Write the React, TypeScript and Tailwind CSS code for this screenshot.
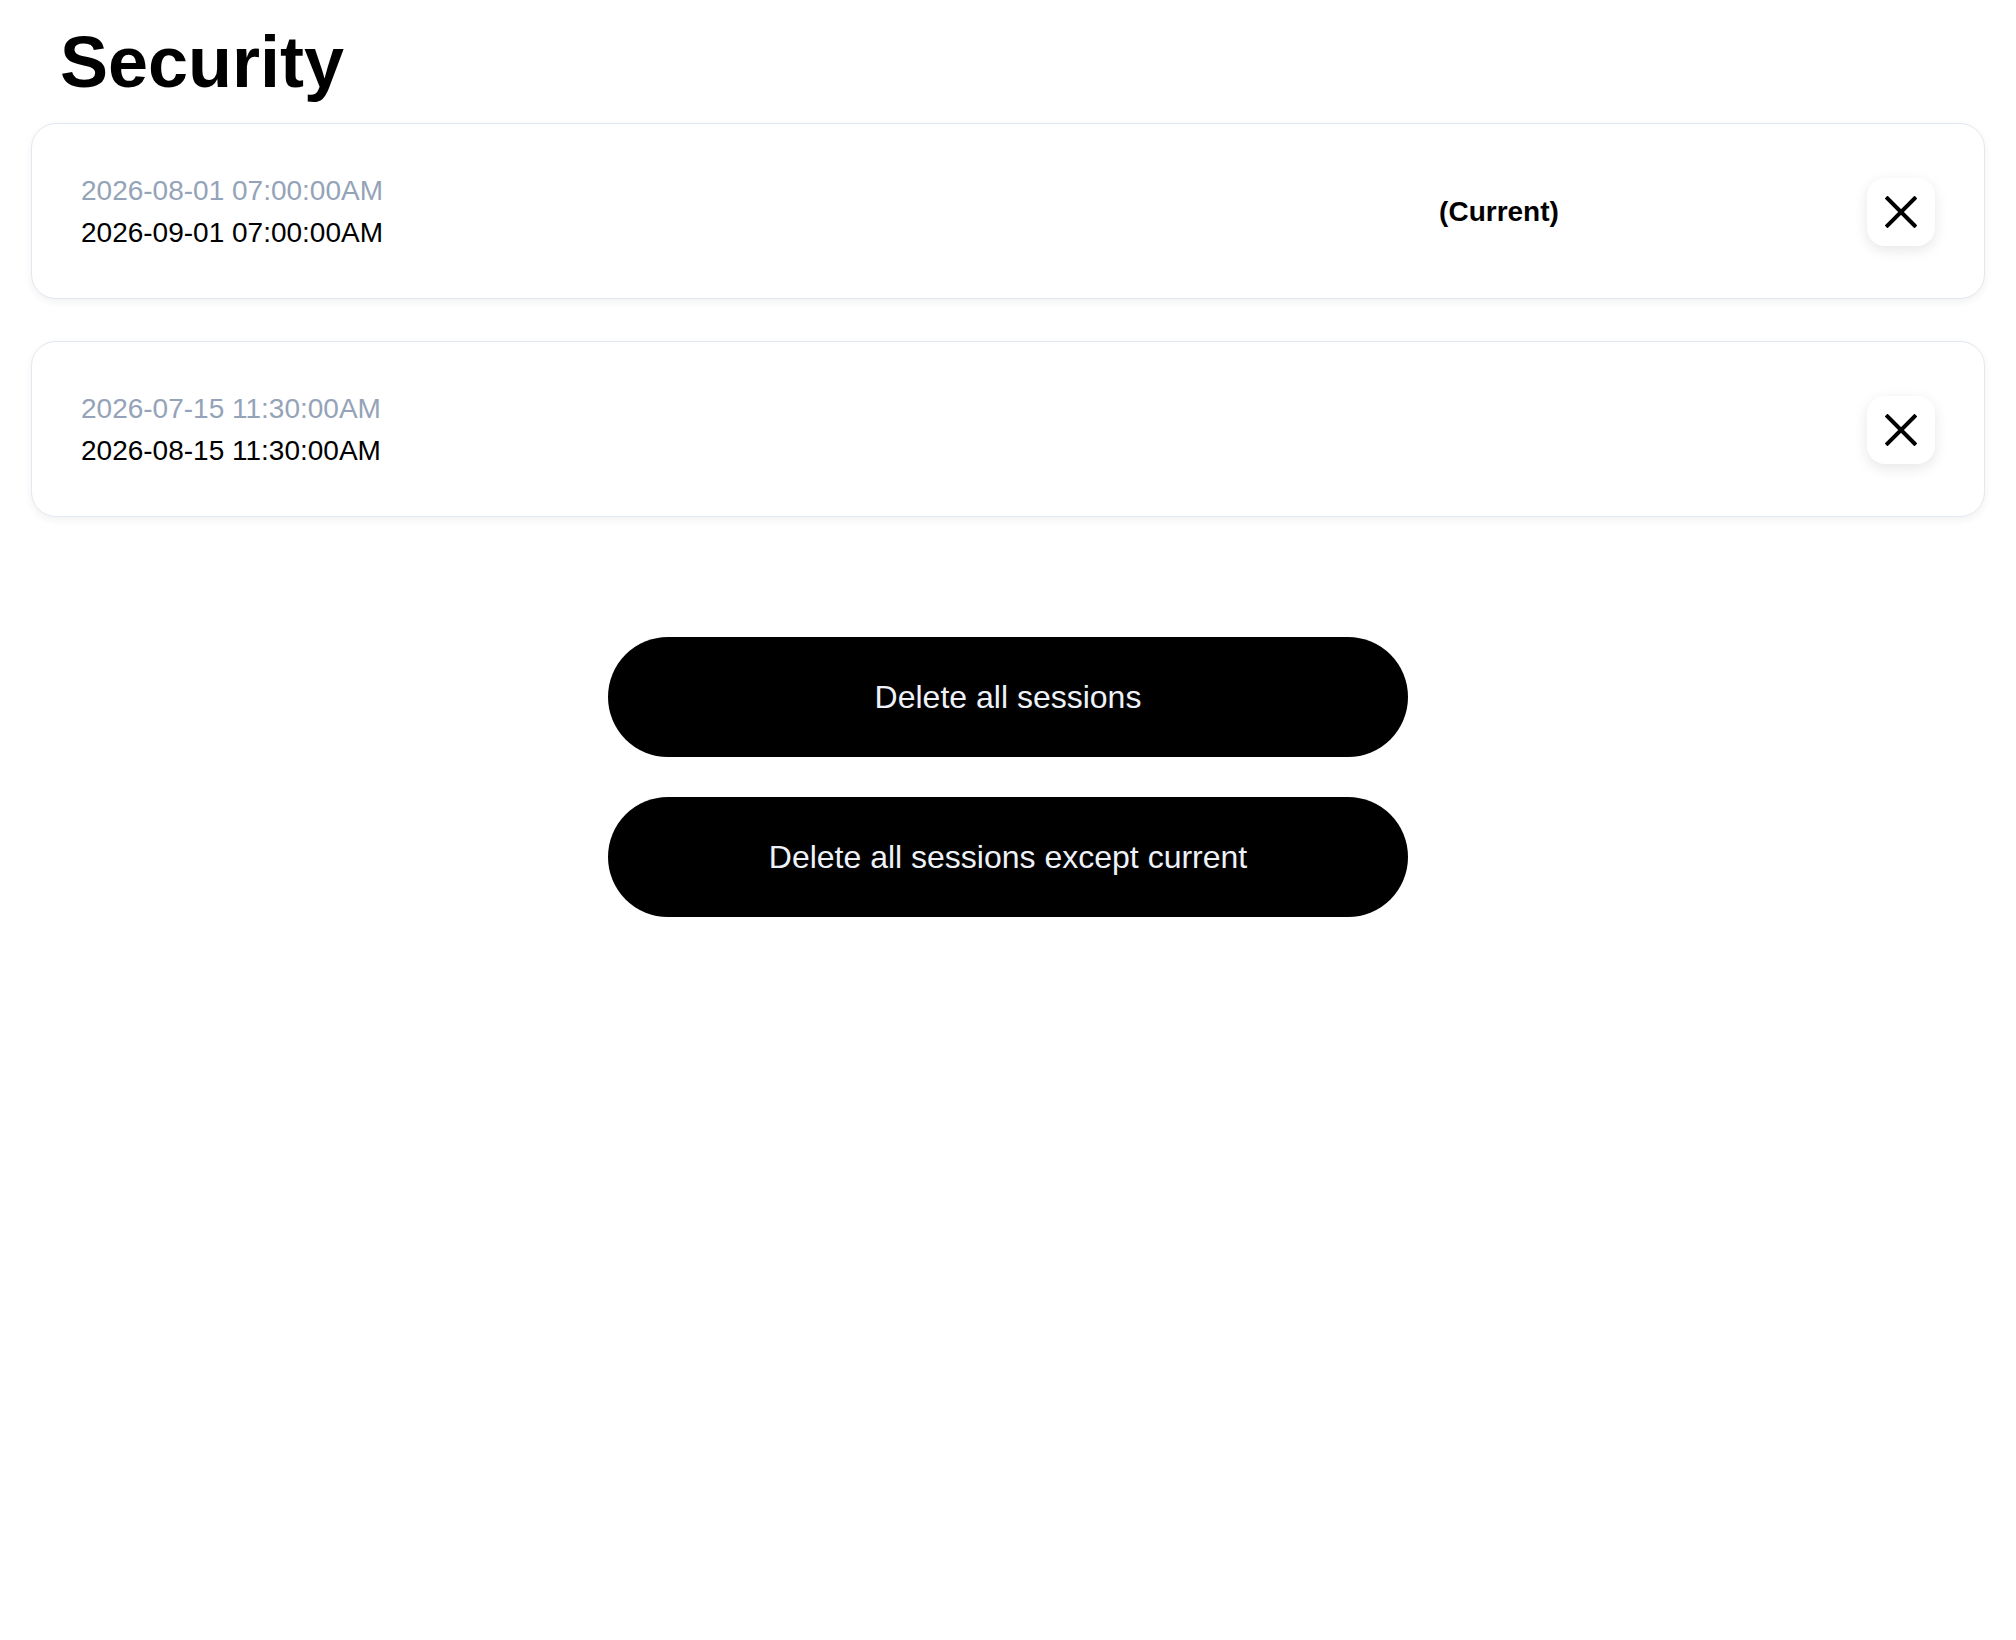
import React from "react";

function XIcon() {
  return (
    <svg width="32" height="32" viewBox="0 0 32 32" fill="none" aria-hidden="true">
      <path d="M2.5 2.5 L29.5 29.5 M29.5 2.5 L2.5 29.5" stroke="#000" strokeWidth="4" strokeLinecap="square" />
    </svg>
  );
}

type Session = { start: string; end: string; current?: boolean };

const sessions: Session[] = [
  { start: "2026-08-01 07:00:00AM", end: "2026-09-01 07:00:00AM", current: true },
  { start: "2026-07-15 11:30:00AM", end: "2026-08-15 11:30:00AM" },
];

function SessionCard({ s }: { s: Session }) {
  return (
    <div className="flex items-center rounded-[25px] border border-[#e2e8f0] bg-white px-[49px] pt-[46px] pb-[44px] shadow-[0_3px_8px_rgba(15,23,42,0.06)]">
      <div className="flex-1 text-[28px] leading-[42px]">
        <div className="text-[#94a3b8]">{s.start}</div>
        <div className="text-black">{s.end}</div>
      </div>
      <div className="w-[736px] text-center text-[28px] font-bold leading-[42px] text-black">
        {s.current ? "(Current)" : ""}
      </div>
      <button className="flex h-[68px] w-[68px] items-center justify-center rounded-[18px] bg-white shadow-[0_4px_14px_rgba(0,0,0,0.10)]">
        <XIcon />
      </button>
    </div>
  );
}

export default function App() {
  return (
    <div className="min-h-screen bg-white px-[31px] font-['Liberation_Sans',Arial,sans-serif]">
      <h1 className="pl-[29px] pt-[22px] text-[72px] font-bold leading-[80px] text-black">Security</h1>
      <div className="mt-[21px] flex flex-col gap-[42px]">
        {sessions.map((s, i) => (
          <SessionCard key={i} s={s} />
        ))}
      </div>
      <div className="mt-[120px] flex flex-col items-center gap-[40px]">
        <button className="h-[120px] w-[800px] rounded-full bg-black text-[32px] leading-[40px] text-[#eef2f8]">
          Delete all sessions
        </button>
        <button className="h-[120px] w-[800px] rounded-full bg-black text-[32px] leading-[40px] text-[#eef2f8]">
          Delete all sessions except current
        </button>
      </div>
    </div>
  );
}
